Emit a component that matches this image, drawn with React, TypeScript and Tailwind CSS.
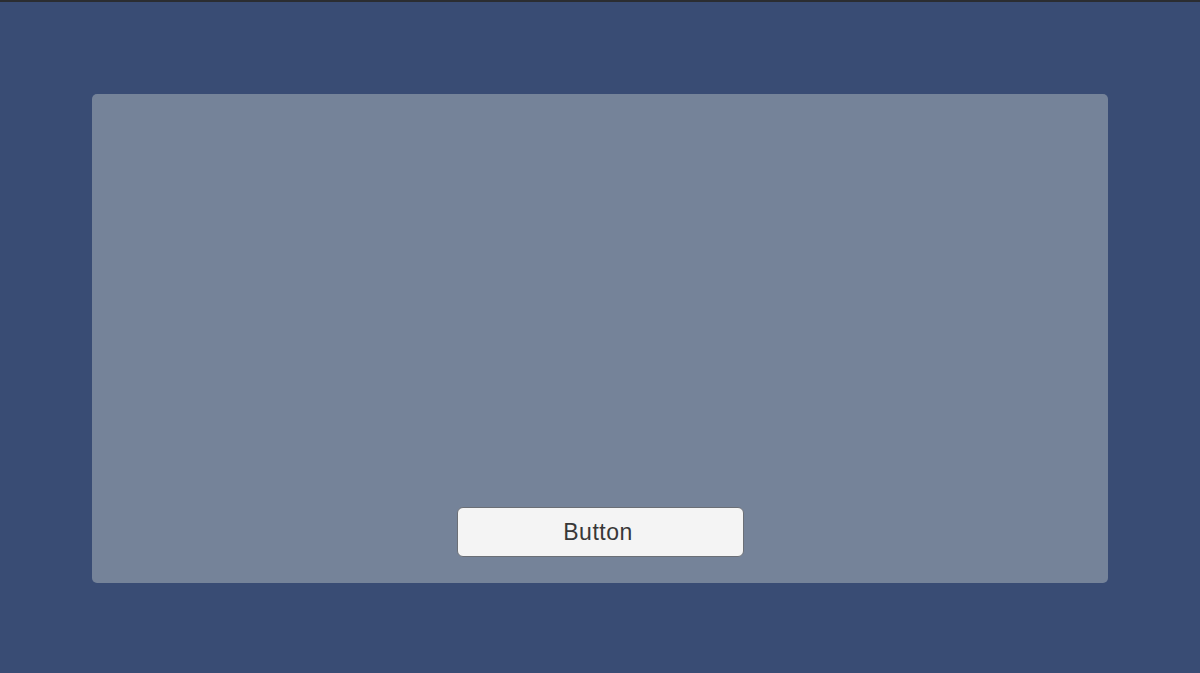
export default function App() {
  return (
    <div className="flex h-[673px] w-[1200px] flex-col overflow-hidden bg-[#394c74]">
      <div className="h-[2px] w-full bg-[#2b2d31]" />
      <div className="pl-[92px] pt-[92px]">
        <div className="flex h-[489px] w-[1016px] flex-col items-center justify-end rounded-[5px] bg-[#758399] pb-[26px]">
          <button
            type="button"
            className="h-[50px] w-[287px] rounded-[6px] border border-[#6b6f76] bg-[#f4f4f4] pr-[4px] font-['Liberation_Sans',Arial,sans-serif] text-[23px] tracking-[0.5px] text-[#383838]"
          >
            Button
          </button>
        </div>
      </div>
    </div>
  );
}
